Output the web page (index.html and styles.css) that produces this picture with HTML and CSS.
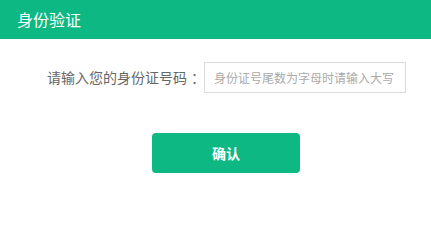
FILE: index.html
```html
<!DOCTYPE html>
<html lang="zh-CN">
<head>
<meta charset="utf-8">
<link rel="stylesheet" href="styles.css">
</head>
<body>
<div class="dialog">
  <div class="header">身份验证</div>
  <div class="content">
    <div class="row">
      <label class="label" for="idno">请输入您的身份证号码<span class="colon">：</span></label>
      <input class="input" id="idno" type="text" placeholder="身份证号尾数为字母时请输入大写">
    </div>
    <div class="actions">
      <button class="btn" type="button">确认</button>
    </div>
  </div>
</div>
</body>
</html>
```
FILE: styles.css
```css
html, body {
  margin: 0;
  padding: 0;
  background: #fff;
}
body {
  font-family: "Noto Sans CJK SC", "Noto Sans", sans-serif;
}
.dialog {
  width: 431px;
  height: 211px;
  background: #fff;
}
.header {
  height: 39px;
  line-height: 39px;
  background: #0db883;
  color: #fff;
  font-size: 16px;
  padding-left: 17px;
}
.content {
  padding-top: 23px;
}
.row {
  display: flex;
  align-items: center;
  padding-left: 47px;
  height: 31px;
}
.label {
  font-size: 14px;
  color: #666;
  line-height: 31px;
  width: 157px;
  white-space: nowrap;
}
.colon {
  margin-left: 4px;
}
.input {
  box-sizing: border-box;
  width: 202px;
  height: 31px;
  border: 1px solid #dcdcdc;
  padding: 0 0 0 9px;
  margin: 0;
  font-family: inherit;
  font-size: 12px;
  color: #333;
  outline: none;
}
.input::placeholder {
  color: #aaa;
}
.actions {
  padding-left: 152px;
  padding-top: 40px;
}
.btn {
  display: block;
  width: 148px;
  height: 40px;
  border: none;
  border-radius: 4px;
  background: #0db883;
  color: #fff;
  font-family: inherit;
  font-size: 14px;
  font-weight: bold;
  padding: 0;
  margin: 0;
  cursor: pointer;
}
```
